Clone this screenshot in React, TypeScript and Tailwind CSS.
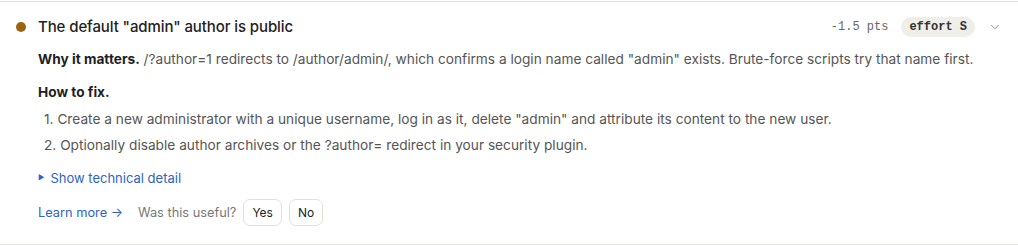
import React from 'react';
import { ChevronDown } from 'lucide-react';

const steps = [
  'Create a new administrator with a unique username, log in as it, delete "admin" and attribute its content to the new user.',
  'Optionally disable author archives or the ?author= redirect in your security plugin.',
];

const App: React.FC = () => {
  return (
    <div className="bg-white w-[1018px] h-[245px] font-['Inter',sans-serif]">
      <div className="border-t border-b border-[#e6e4df] mt-px pb-[18px]">
        <div className="flex items-center h-[47px] pt-[3px] pl-[16px] pr-[16px]">
          <span className="w-[10px] h-[10px] rounded-full bg-[#9a6414] shrink-0" />
          <h3 className="ml-[12px] text-[15px] font-medium text-[#222] tracking-[-0.1px]">
            The default "admin" author is public
          </h3>
          <div className="ml-auto flex items-center">
            <span className="font-['Liberation_Mono',monospace] text-[12px] text-[#666]">-1.5 pts</span>
            <span className="ml-[13px] px-[8px] h-[20px] flex items-center rounded-full bg-[#efeee9] font-['Liberation_Mono',monospace] text-[12px] font-bold text-[#333]">
              effort S
            </span>
            <ChevronDown className="ml-[13px] w-[14px] h-[14px] text-[#777]" strokeWidth={1.5} />
          </div>
        </div>
        <div className="pl-[38px] pr-[20px] text-[13.7px] text-[#555]">
          <p className="leading-[20px]">
            <strong className="font-bold text-[#1f1f1f]">Why it matters.</strong>{' '}
            /?author=1 redirects to /author/admin/, which confirms a login name called "admin" exists. Brute-force scripts try that name first.
          </p>
          <p className="mt-[13px] font-bold text-[#1f1f1f] leading-[20px]">How to fix.</p>
          <ol className="mt-[7px] space-y-[6px]">
            {steps.map((s, i) => (
              <li key={i} className="pl-[6px] leading-[20px]">
                {i + 1}. {s}
              </li>
            ))}
          </ol>
          <button className="mt-[13px] flex items-center gap-[6px] text-[#2d63c8] text-[13px] leading-[20px]">
            <span className="text-[7px]">▶</span>
            <span>Show technical detail</span>
          </button>
          <div className="mt-[11px] flex items-center text-[12.8px]">
            <a className="text-[#2d63c8]">Learn more →</a>
            <span className="ml-[15px] text-[#777]">Was this useful?</span>
            <button className="ml-[7px] h-[27px] px-[8px] border border-[#e2e0da] rounded-[7px] text-[12px] text-[#222]">Yes</button>
            <button className="ml-[7px] h-[27px] px-[8px] border border-[#e2e0da] rounded-[7px] text-[12px] text-[#222]">No</button>
          </div>
        </div>
      </div>
    </div>
  );
};

export default App;
